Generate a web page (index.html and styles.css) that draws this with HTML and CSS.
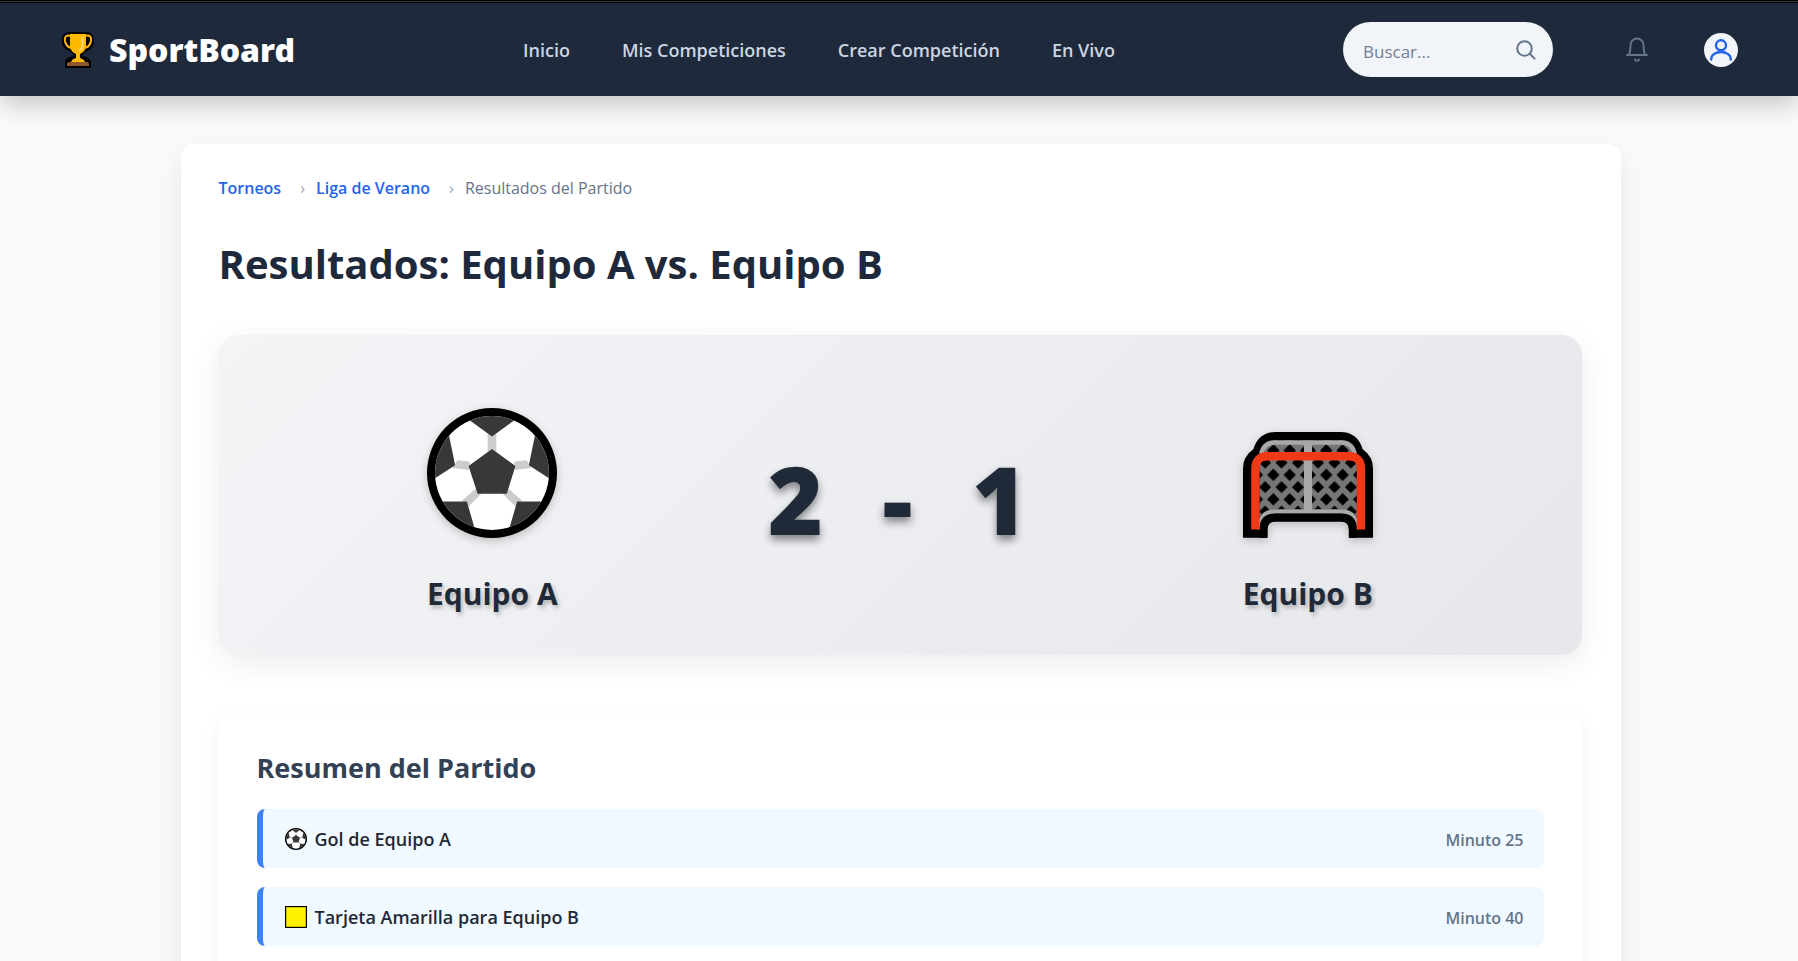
FILE: index.html
```html
<!DOCTYPE html>
<html lang="es">
<head>
<meta charset="utf-8">
<title>SportBoard - Resultados del Partido</title>
<link rel="stylesheet" href="styles.css">
</head>
<body>
<header class="topbar">
  <a class="brand" href="#">
    <svg class="brand-icon" viewBox="0 0 32 36" aria-hidden="true">
      <path d="M6 0H26Q32 1 32 9Q32 17 23 20L20 24Q29 25 29 31V36H3V31Q3 25 12 24L9 20Q0 17 0 9Q0 1 6 0Z" fill="#000"/>
      <path d="M9 4Q2 2 3 9Q4 15 10 16M23 4Q30 2 29 9Q28 15 22 16" fill="none" stroke="#ffb900" stroke-width="2"/>
      <path d="M8 2H24V14Q24 19 18 22V26Q22 27 23 30H9Q10 27 14 26V22Q8 19 8 14Z" fill="#ffb900"/>
      <path d="M20.500 5V14Q20.500 17 17 19" fill="none" stroke="#ffd56b" stroke-width="2"/>
      <path d="M5 34V32Q5 30 7 30H25Q27 30 27 32V34Z" fill="#8e562e"/>
    </svg>
    <span>SportBoard</span>
  </a>
  <nav class="nav">
    <a href="#">Inicio</a>
    <a href="#">Mis Competiciones</a>
    <a href="#">Crear Competición</a>
    <a href="#">En Vivo</a>
  </nav>
  <div class="tools">
    <form class="search">
      <input type="text" placeholder="Buscar..." aria-label="Buscar">
      <button type="button" aria-label="Buscar">
        <svg viewBox="0 0 20 20" fill="none" stroke="currentColor" stroke-width="2" stroke-linecap="round"><circle cx="8.500" cy="8.500" r="7.300"/><path d="M13.800 13.800L18.600 18.600"/></svg>
      </button>
    </form>
    <button class="bell" type="button" aria-label="Notificaciones">
      <svg viewBox="0 0 22 25" fill="none" stroke="currentColor" stroke-width="2" stroke-linecap="round" stroke-linejoin="round"><path d="M1 18H21M3 18C4.500 14 4.500 12 4.500 8A6.500 6.500 0 0 1 17.500 8C17.500 12 17.500 14 19 18M9 22.500C9.500 24.200 12.500 24.200 13 22.500"/></svg>
    </button>
    <button class="avatar" type="button" aria-label="Perfil">
      <svg viewBox="0 0 22 22" fill="none" stroke="currentColor" stroke-width="2.400" stroke-linecap="round"><circle cx="11" cy="6.300" r="5"/><path d="M1.200 20.500C1.200 10.500 20.800 10.500 20.800 20.500"/></svg>
    </button>
  </div>
</header>

<main class="page">
  <nav class="crumbs" aria-label="Ruta">
    <a href="#">Torneos</a>
    <span class="sep">›</span>
    <a href="#">Liga de Verano</a>
    <span class="sep">›</span>
    <span>Resultados del Partido</span>
  </nav>
  <h1 class="title">Resultados: Equipo A vs. Equipo B</h1>

  <section class="board">
    <div class="team">
      <svg class="team-icon" viewBox="84 83 388 388" role="img" aria-label="Balón">
        <defs>
          <clipPath id="ballClip"><circle cx="278" cy="277" r="170"/></clipPath>
          <symbol id="ball" viewBox="84 83 388 388">
            <circle cx="278" cy="277" r="194" fill="#000"/>
            <g clip-path="url(#ballClip)">
              <rect x="84" y="83" width="388" height="388" fill="#fff"/>
              <path d="M265 158L278 166L291 158V214L278 205L265 214Z" fill="#ccc"/>
              <path d="M175 239L212 243L209 268L160 262ZM381 239L344 243L347 268L396 262ZM228 325L246 339L209 376L188 360ZM328 325L310 339L348 376L368 360Z" fill="#ccc"/>
              <path d="M278 205L348 256L322 339H235L208 256ZM205 100V115L278 168L351 115V100ZM150 166L168 254L90 304V160ZM406 166L388 254L466 304V160ZM120 362H203L227 445L160 450ZM436 362H353L329 445L396 450Z" fill="#383838"/>
            </g>
          </symbol>
          <pattern id="netLeft" x="137" y="199" width="49" height="73" patternUnits="userSpaceOnUse">
            <rect width="49" height="73" fill="#767676"/>
            <path id="mesh" d="M24.500 6L43 24.500L24.500 43L6 24.500ZM0 43L18 61L0 79L-18 61ZM49 43L67 61L49 79L31 61ZM0 -30L18 -12L0 6L-18 -12ZM49 -30L67 -12L49 6L31 -12Z" fill="#000"/>
          </pattern>
          <pattern id="netRight" x="295" y="199" width="49" height="73" patternUnits="userSpaceOnUse">
            <rect width="49" height="73" fill="#767676"/>
            <use href="#mesh"/>
          </pattern>
        </defs>
        <use href="#ball" x="84" y="83" width="388" height="388"/>
      </svg>
      <h2>Equipo A</h2>
    </div>
    <div class="score"><span>2</span><span>-</span><span>1</span></div>
    <div class="team">
      <svg class="team-icon" viewBox="71 24 388 388" role="img" aria-label="Portería">
        <path d="M71 411V205Q71 168 102 147Q118 96 168 96H362Q412 96 428 147Q459 168 459 205V411H387V387Q387 363 363 363H168Q144 363 144 387V411Z" fill="#000"/>
        <path d="M265 121V327H168Q136 327 120 350V170Q125 121 165 121Z" fill="url(#netLeft)"/>
        <path d="M265 121V327H363Q395 327 411 350V170Q405 121 365 121Z" fill="url(#netRight)"/>
        <path d="M125 163Q132 127 165 127H365Q398 127 405 163M120 387Q120 333 168 333H363Q411 333 411 387" fill="none" stroke="#a8a8a8" stroke-width="13"/>
        <path d="M265 125V334" stroke="#a8a8a8" stroke-width="24"/>
        <path d="M120 411V387Q120 339 168 339H363Q411 339 411 387V411H387V387Q387 363 363 363H168Q144 363 144 387V411Z" fill="#000"/>
        <path d="M108 387V205Q108 168 145 168H386Q423 168 423 205V387" fill="none" stroke="#f03a17" stroke-width="25"/>
      </svg>
      <h2>Equipo B</h2>
    </div>
  </section>

  <section class="summary">
    <h2>Resumen del Partido</h2>
    <ul class="events">
      <li>
        <span class="event"><svg viewBox="0 0 22 22" aria-hidden="true"><use href="#ball" width="22" height="22"/></svg>Gol de Equipo A</span>
        <span class="minute">Minuto 25</span>
      </li>
      <li>
        <span class="event"><svg viewBox="0 0 22 22" aria-hidden="true"><rect x="0.500" y="0.500" width="21" height="21" fill="#fff100" stroke="#000" stroke-width="1.400"/></svg>Tarjeta Amarilla para Equipo B</span>
        <span class="minute">Minuto 40</span>
      </li>
    </ul>
  </section>
</main>
</body>
</html>
```
FILE: styles.css
```css
* { box-sizing: border-box; }

body {
  margin: 0;
  padding-left: 3px;
  background: #f9fafc;
  color: #1f2937;
  font-family: "Open Sans", "Noto Sans", sans-serif;
  font-size: 17px;
}

h1, h2, ul { margin: 0; padding: 0; }
a { color: inherit; text-decoration: none; }
button { border: 0; padding: 0; background: none; }
svg { display: block; }

.topbar {
  display: flex;
  align-items: center;
  justify-content: space-between;
  height: 96px;
  margin-left: -3px;
  padding: 3px 60px 0 62px;
  background: linear-gradient(#000 1px, #3a3537 1px, #3a3537 2px, #000 2px, #000 3px, #1e293b 3px);
  box-shadow: 0 8px 24px rgba(0, 0, 0, 0.22);
}

.brand {
  display: flex;
  align-items: center;
  gap: 15px;
  color: #fff;
  font-family: "Noto Sans", "Open Sans", sans-serif;
  font-size: 32px;
  font-weight: 900;
}

.brand-icon { width: 32px; height: 36px; }

.nav {
  display: flex;
  gap: 52px;
  color: #cbd5e1;
  font-size: 18px;
  font-weight: 600;
}

.tools { display: flex; align-items: center; }

.search {
  display: flex;
  align-items: center;
  width: 210px;
  height: 55px;
  padding: 0 17px 0 20px;
  border-radius: 28px;
  background: #f1f5f9;
  color: #64748b;
}

.search input {
  flex: 1;
  min-width: 0;
  border: 0;
  padding: 3px 0 0;
  background: none;
  color: inherit;
  font: inherit;
  font-size: 17px;
}

.search input::placeholder { color: #718096; opacity: 1; }
.search button { color: inherit; }
.search svg { width: 20px; height: 20px; }

.bell { margin-left: 73px; color: #64748b; }
.bell svg { width: 22px; height: 25px; }

.avatar {
  display: grid;
  place-items: center;
  width: 34px;
  height: 34px;
  margin-left: 56px;
  border-radius: 50%;
  background: #f1f5f9;
  color: #2563eb;
}

.avatar svg { width: 22px; height: 22px; }

.page {
  max-width: 1440px;
  margin: 48px auto;
  padding: 32px 39px 38px 38px;
  border-radius: 14px;
  background: #fff;
  box-shadow: 0 10px 30px rgba(0, 0, 0, 0.08);
}

.crumbs {
  display: flex;
  align-items: center;
  line-height: 24px;
  color: #64748b;
  font-size: 16px;
}

.crumbs a { color: #2563eb; font-weight: 600; }
.crumbs .sep { padding: 0 11px 0 19px; color: #94a3b8; }

.title {
  margin-top: 35px;
  font-size: 40px;
  line-height: 58px;
  font-weight: 700;
  color: #1e293b;
}

.board {
  display: grid;
  grid-template-columns: 1fr 268px 1fr;
  align-items: center;
  height: 320px;
  margin-top: 42px;
  border-radius: 20px;
  background: linear-gradient(135deg, #f3f4f6, #e5e7eb);
  box-shadow: 0 8px 30px rgba(0, 0, 0, 0.08);
}

.team {
  display: flex;
  flex-direction: column;
  align-items: center;
  gap: 34px;
  padding-top: 34px;
}

.team-icon {
  width: 130px;
  height: 130px;
  filter: drop-shadow(0 3px 4px rgba(0, 0, 0, 0.2));
}

.team h2 {
  font-size: 30px;
  line-height: 44px;
  text-shadow: 2px 3px 4px rgba(0, 0, 0, 0.25);
}

.score {
  display: flex;
  justify-content: space-between;
  padding: 8px 7px 0 2px;
  font-size: 94px;
  line-height: 120px;
  font-weight: 800;
  text-shadow: 0 5px 8px rgba(0, 0, 0, 0.45);
}

.summary {
  margin-top: 58px;
  padding: 33px 38px 38px;
  border-radius: 14px;
  background: #fff;
  box-shadow: 0 5px 20px rgba(0, 0, 0, 0.05);
}

.summary h2 {
  font-size: 27px;
  line-height: 44px;
  color: #334155;
}

.events {
  display: grid;
  gap: 19px;
  margin-top: 19px;
  list-style: none;
}

.events li {
  display: flex;
  align-items: center;
  justify-content: space-between;
  height: 59px;
  padding: 0 20px 0 22px;
  border-left: 6px solid #3b82f6;
  border-radius: 8px;
  background: #f0f9ff;
}

.event {
  display: flex;
  align-items: center;
  gap: 8px;
  font-size: 18px;
  font-weight: 600;
}

.event svg { width: 22px; height: 22px; }

.minute {
  padding-top: 2px;
  color: #64748b;
  font-size: 16px;
  font-weight: 600;
}
```
